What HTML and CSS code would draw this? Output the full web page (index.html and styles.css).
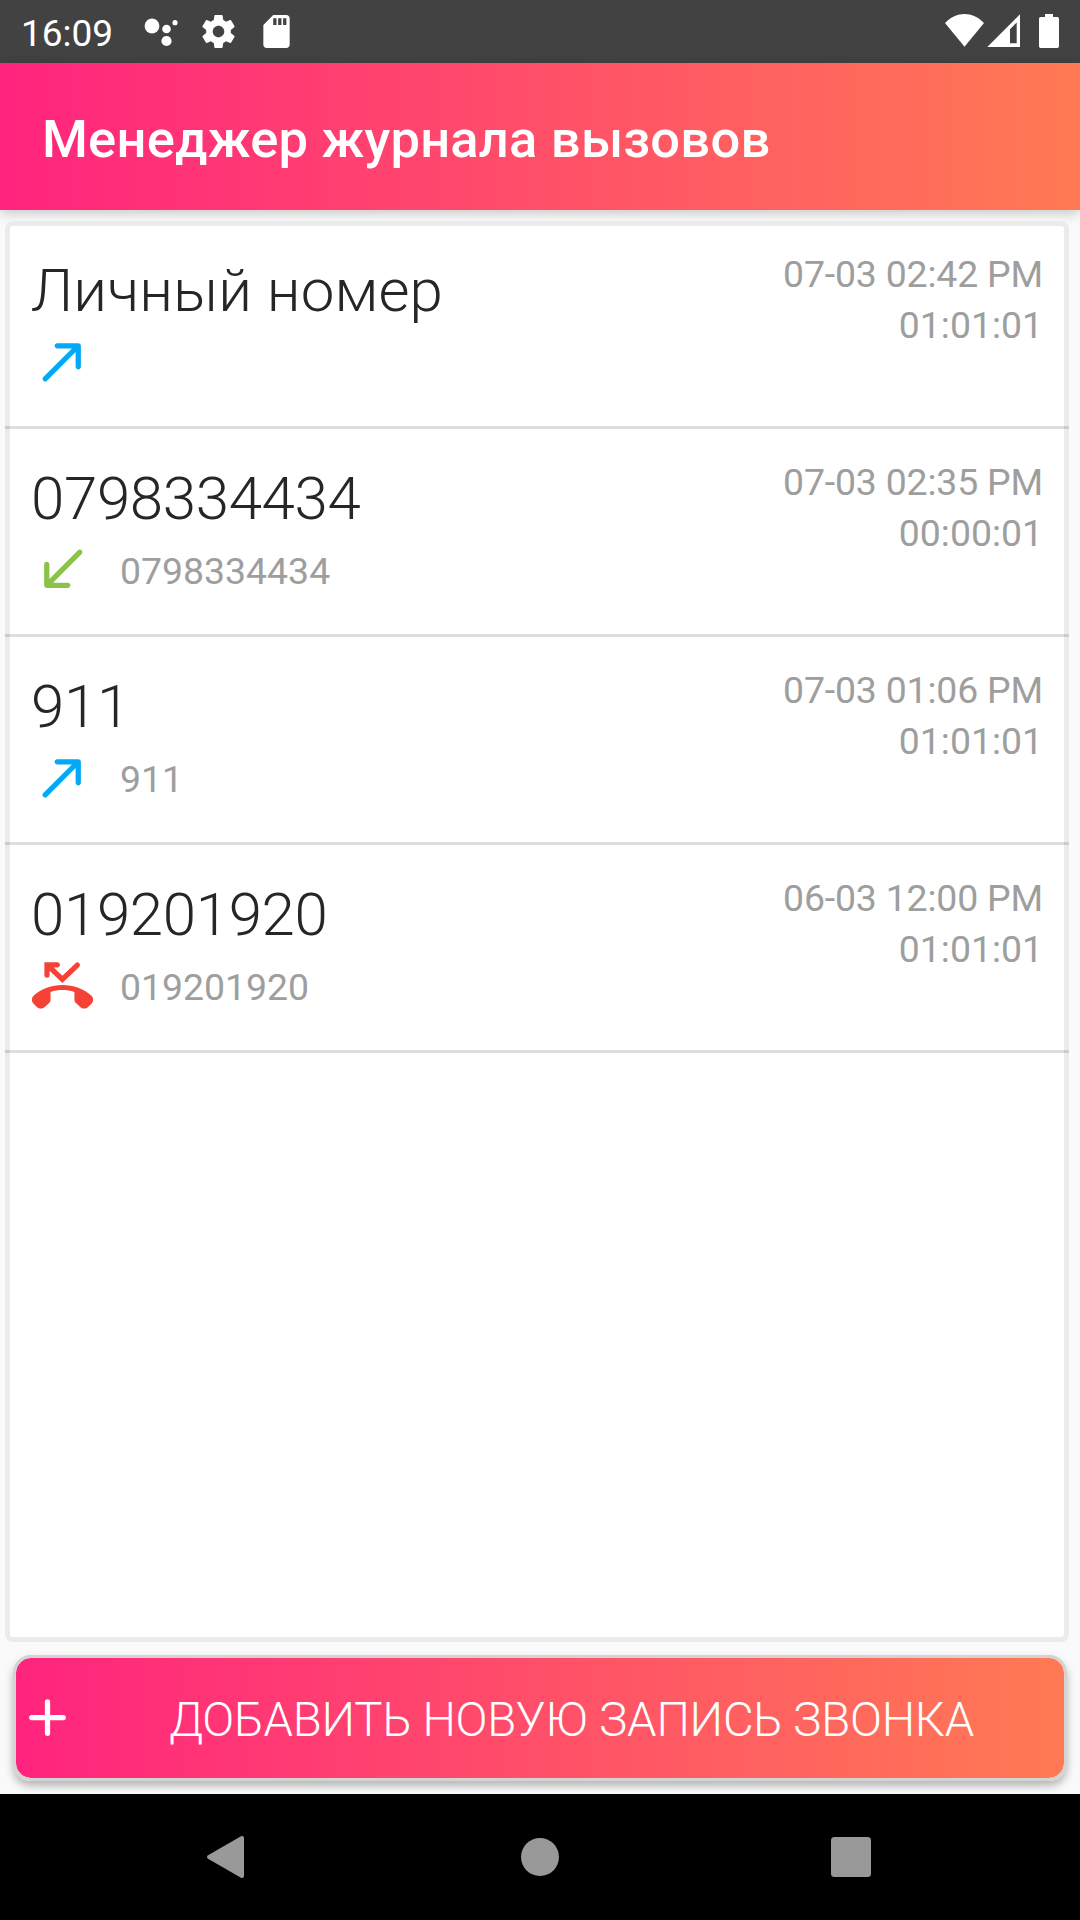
FILE: index.html
```html
<!DOCTYPE html>
<html lang="ru">
<head>
<meta charset="utf-8">
<title>Менеджер журнала вызовов</title>
<link rel="stylesheet" href="styles.css">
</head>
<body>
<svg class="defs" width="0" height="0">
  <symbol id="outgoing" viewBox="0 0 24 24"><path d="M9 6c0 .56.45 1 1 1h5.59L4.7 17.89a.996.996 0 1 0 1.41 1.41L17 8.41V14c0 .55.45 1 1 1s1-.45 1-1V6c0-.55-.45-1-1-1h-8c-.56 0-1 .45-1 1z"/></symbol>
  <symbol id="incoming" viewBox="0 0 24 24"><path d="M19.3 4.71a.996.996 0 0 0-1.41 0L7 15.59V10c0-.55-.45-1-1-1s-1 .45-1 1v8c0 .55.45 1 1 1h8c.55 0 1-.45 1-1s-.45-1-1-1H8.41L19.3 6.11c.38-.38.38-1.02 0-1.4z"/></symbol>
  <symbol id="missed" viewBox="0 0 24 24">
    <path d="M6.1 8V4.1H10M6.4 4.3L11.95 9.7 17.65 4.2" fill="none" stroke="currentColor" stroke-width="2" stroke-linecap="round"/>
    <path d="M12 11.85C7.9 11.85 4 13.2.95 15.9c-.8.8-.85 2.1-.05 2.95l1.35 1.3c.8.8 2.05.85 2.9.1l1.55-1.35c.5-.4.75-.95.75-1.55v-2.9c2.9-.95 6.2-.95 9.1 0v2.9c0 .6.25 1.15.75 1.55l1.55 1.35c.85.75 2.1.7 2.9-.1l1.35-1.3c.8-.85.75-2.15-.05-2.95C20 13.2 16.1 11.85 12 11.85z"/>
  </symbol>
</svg>
<div class="screen">
  <div class="status">
    <span class="clock">16:09</span>
    <svg class="dots" width="34" height="33" viewBox="144 15 34 33"><circle cx="152" cy="26" r="7.4"/><circle cx="166.5" cy="29" r="4.3"/><circle cx="166.5" cy="41" r="5.1"/><circle cx="175" cy="22.7" r="2.6"/></svg>
    <svg class="gear" width="33" height="33" viewBox="2 2 20 20"><path d="M19.43 12.98c.04-.32.07-.64.07-.98s-.03-.66-.07-.98l2.11-1.65c.19-.15.24-.42.12-.64l-2-3.46c-.12-.22-.39-.3-.61-.22l-2.49 1c-.52-.4-1.08-.73-1.69-.98l-.38-2.65C14.46 2.18 14.25 2 14 2h-4c-.25 0-.46.18-.49.42l-.38 2.65c-.61.25-1.17.59-1.69.98l-2.49-1c-.23-.09-.49 0-.61.22l-2 3.46c-.13.22-.07.49.12.64l2.11 1.65c-.04.32-.07.65-.07.98s.03.66.07.98l-2.11 1.65c-.19.15-.24.42-.12.64l2 3.46c.12.22.39.3.61.22l2.49-1c.52.4 1.08.73 1.69.98l.38 2.65c.03.24.24.42.49.42h4c.25 0 .46-.18.49-.42l.38-2.65c.61-.25 1.17-.59 1.69-.98l2.49 1c.23.09.49 0 .61-.22l2-3.46c.12-.22.07-.49-.12-.64l-2.11-1.65zM12 15.5c-1.93 0-3.5-1.57-3.5-3.5s1.57-3.5 3.5-3.5 3.5 1.57 3.5 3.5-1.57 3.5-3.5 3.5z"/></svg>
    <svg class="sd" width="27" height="33" viewBox="3.8 2 16.4 20"><path d="M18 2h-8L4.02 8 4 20c0 1.1.9 2 2 2h12c1.1 0 2-.9 2-2V4c0-1.1-.9-2-2-2zm-6 6h-2V4h2v4zm3 0h-2V4h2v4zm3 0h-2V4h2v4z"/></svg>
    <svg class="signals" width="115" height="35" viewBox="945 14 115 35">
      <path d="M945 23C956.500 11 972.500 11 984 23L964.500 46.800z"/>
      <path fill-rule="evenodd" d="M1020 14.300V46.900H987.300zM1016.700 22.500L1010 29.200V43.300H1016.700z"/>
      <path d="M1045 14h8v3h4.300q1.700 0 1.700 1.700v27.500q0 1.700-1.700 1.700h-16.600q-1.700 0-1.700-1.700V18.700q0-1.700 1.700-1.700h4.300z"/>
    </svg>
  </div>
  <header class="appbar"><h1 class="title">Менеджер журнала вызовов</h1></header>
  <main class="content">
    <ul class="log">
      <li class="call">
        <div class="who"><div class="name contact">Личный номер</div><div class="detail"><svg class="icon blue"><use href="#outgoing"/></svg></div></div>
        <div class="when"><div class="date">07-03 02:42 PM</div><div class="duration">01:01:01</div></div>
      </li>
      <li class="call">
        <div class="who"><div class="name">0798334434</div><div class="detail"><svg class="icon green"><use href="#incoming"/></svg><span class="number">0798334434</span></div></div>
        <div class="when"><div class="date">07-03 02:35 PM</div><div class="duration">00:00:01</div></div>
      </li>
      <li class="call">
        <div class="who"><div class="name">911</div><div class="detail"><svg class="icon blue"><use href="#outgoing"/></svg><span class="number">911</span></div></div>
        <div class="when"><div class="date">07-03 01:06 PM</div><div class="duration">01:01:01</div></div>
      </li>
      <li class="call">
        <div class="who"><div class="name">019201920</div><div class="detail"><svg class="icon red"><use href="#missed"/></svg><span class="number">019201920</span></div></div>
        <div class="when"><div class="date">06-03 12:00 PM</div><div class="duration">01:01:01</div></div>
      </li>
    </ul>
    <button class="add">
      <svg class="plus" viewBox="0 0 24 24"><path d="M12 6v12M6 12h12" fill="none" stroke="#fff" stroke-width="2" stroke-linecap="round"/></svg>
      <span class="label">ДОБАВИТЬ НОВУЮ ЗАПИСЬ ЗВОНКА</span>
    </button>
  </main>
  <nav class="nav">
    <svg width="66" height="66" viewBox="196 1824 66 66"><path d="M209 1857L242 1838V1876z" stroke="#999" stroke-width="4" stroke-linejoin="round"/></svg>
    <svg width="66" height="66" viewBox="507 1824 66 66"><circle cx="540" cy="1857" r="19"/></svg>
    <svg width="66" height="66" viewBox="818 1824 66 66"><rect x="831" y="1837" width="40" height="40" rx="3.500"/></svg>
  </nav>
</div>
</body>
</html>
```
FILE: styles.css
```css
* { box-sizing: border-box; }
body { margin: 0; font-family: Roboto, sans-serif; }
svg { display: block; flex: none; }
.defs { position: absolute; }
.screen { width: 1080px; height: 1920px; display: flex; flex-direction: column; background: #fafafa; }

.status { height: 63px; flex: none; display: flex; align-items: flex-start; padding: 14px 20px 0 21px; background: #424242; color: #fff; fill: #fff; }
.clock { width: 123px; padding-top: 1px; font-size: 37px; line-height: 38px; }
.dots { margin-top: 1px; }
.gear { margin: 1px 0 0 24px; }
.sd { margin: 1px 0 0 28px; }
.signals { margin-left: auto; }

.appbar { position: relative; z-index: 0; height: 147px; flex: none; display: flex; align-items: center; padding-left: 42px; background: linear-gradient(90deg, #ff247e, #ff7a54); box-shadow: 0 3px 12px rgba(0, 0, 0, .22); }
.title { margin: 0; padding-top: 4px; color: #fff; font-size: 52.5px; font-weight: 500; line-height: 62px; letter-spacing: .21px; white-space: nowrap; }

.content { position: relative; z-index: 1; flex: 1; display: flex; flex-direction: column; padding: 11px 11px 13px 5px; overflow: hidden; }
.log { flex: 1; margin: 0; padding: 0; list-style: none; background: #fff; border-radius: 8px; box-shadow: inset 0 0 0 5px #ebebeb; }
.call { height: 208px; display: flex; justify-content: space-between; padding: 0 26px; border-bottom: 3px solid rgba(0, 0, 0, .13); }
.name { padding-top: 35px; color: #262626; font-size: 60px; font-weight: 300; line-height: 70px; letter-spacing: -.34px; }
.contact { letter-spacing: .12px; }
.detail { display: flex; align-items: center; height: 63px; margin-top: 4px; gap: 26px; color: #9e9e9e; }
.number, .when { font-size: 37.4px; white-space: nowrap; }
.number { line-height: 44px; padding-top: 3px; }
.when { padding-top: 28px; color: #9e9e9e; text-align: right; line-height: 51px; }
.date { letter-spacing: -.17px; }
.icon { width: 63px; height: 63px; fill: currentColor; }
.blue { color: #03a9f4; }
.green { color: #8bc34a; }
.red { color: #f44336; }

.add { height: 126px; flex: none; display: flex; align-items: center; margin: 13px 2px 0 8px; padding: 0; border: 3px solid #d3d3d3; border-radius: 18px; background: linear-gradient(90deg, #ff247e, #ff7a54) padding-box; box-shadow: 0 5px 9px rgba(0, 0, 0, .28); color: #fff; font-family: inherit; }
.plus { width: 63px; height: 63px; margin-bottom: 2px; }
.label { flex: 1; font-size: 47.25px; font-weight: 300; line-height: 56px; padding-top: 4px; letter-spacing: -.25px; text-align: center; white-space: nowrap; }

.nav { position: relative; z-index: 2; height: 126px; flex: none; display: flex; align-items: center; justify-content: space-between; padding: 0 196px; background: #000; fill: #999; }
```
